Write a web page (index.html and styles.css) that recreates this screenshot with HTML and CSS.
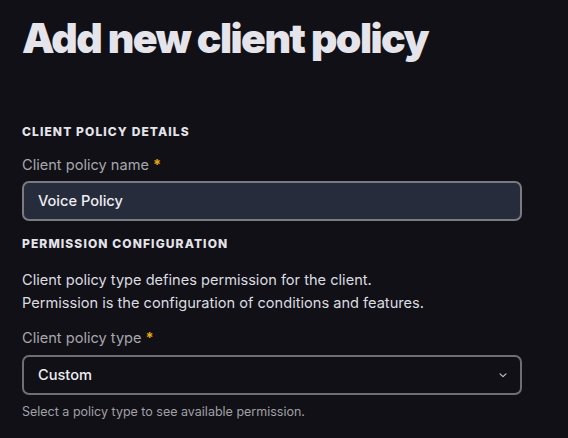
FILE: index.html
```html
<!DOCTYPE html>
<html>
<head>
<meta charset="utf-8">
<link rel="stylesheet" href="styles.css">
</head>
<body>
<main class="page">
  <h1 class="title">Add new client policy</h1>
  <section class="section">
    <h2 class="section-title">Client policy details</h2>
    <label class="label">Client policy name<span class="req">*</span></label>
    <div class="input">Voice Policy</div>
  </section>
  <section class="section perm">
    <h2 class="section-title">Permission configuration</h2>
    <p class="desc">Client policy type defines permission for the client.<br>Permission is the configuration of conditions and features.</p>
    <label class="label">Client policy type<span class="req">*</span></label>
    <div class="select">
      <span>Custom</span>
      <svg class="chev" width="10" height="10" viewBox="0 0 10 10"><path d="M2 3.8 L5 6.6 L8 3.8" fill="none" stroke="#c8c8cc" stroke-width="1.1" stroke-linecap="round" stroke-linejoin="round"/></svg>
    </div>
    <p class="help">Select a policy type to see available permission.</p>
  </section>
</main>
</body>
</html>
```

FILE: styles.css
```css
* { box-sizing: border-box; }
html, body { margin: 0; padding: 0; background: #111016; }
body { font-family: Inter, "Noto Sans", sans-serif; color: #e4e4ea; }
.page { padding: 11px 22px 0 22px; width: 544px; }
.title {
  margin: 0;
  font-size: 41px;
  font-weight: 900;
  letter-spacing: -1.55px;
  line-height: 54px;
  color: #e4e4ea;
}
.section { display: flex; flex-direction: column; }
.section-title {
  margin: 60px 0 0 0;
  font-size: 12px;
  font-weight: 800;
  letter-spacing: 1.1px;
  text-transform: uppercase;
  line-height: 14px;
  color: #e4e4ea;
}
.perm .section-title { margin-top: 16px; }
.label {
  margin-top: 17px;
  font-size: 14.6px;
  line-height: 18px;
  color: #a7a7ad;
}
.req { color: #e8a913; margin-left: 4px; font-weight: 700; }
.input {
  margin-top: 7px;
  height: 40px;
  border: 2px solid #7a7b80;
  border-radius: 7px;
  background: #262c3b;
  padding: 0 14px;
  display: flex;
  align-items: center;
  font-size: 14.6px;
  font-weight: 500;
  color: #eeeef2;
}
.desc {
  margin: 18px 0 0 0;
  font-size: 14.6px;
  line-height: 23px;
  color: #dcdce0;
}
.perm .label { margin-top: 14px; }
.select {
  margin-top: 8px;
  height: 40px;
  border: 2px solid #6e6f74;
  border-radius: 7px;
  padding: 0 12px 0 14px;
  display: flex;
  align-items: center;
  justify-content: space-between;
  font-size: 14.6px;
  font-weight: 500;
  color: #eeeef2;
}
.help {
  margin: 9px 0 0 0;
  font-size: 12.5px;
  line-height: 16px;
  color: #a0a0a6;
}
```
